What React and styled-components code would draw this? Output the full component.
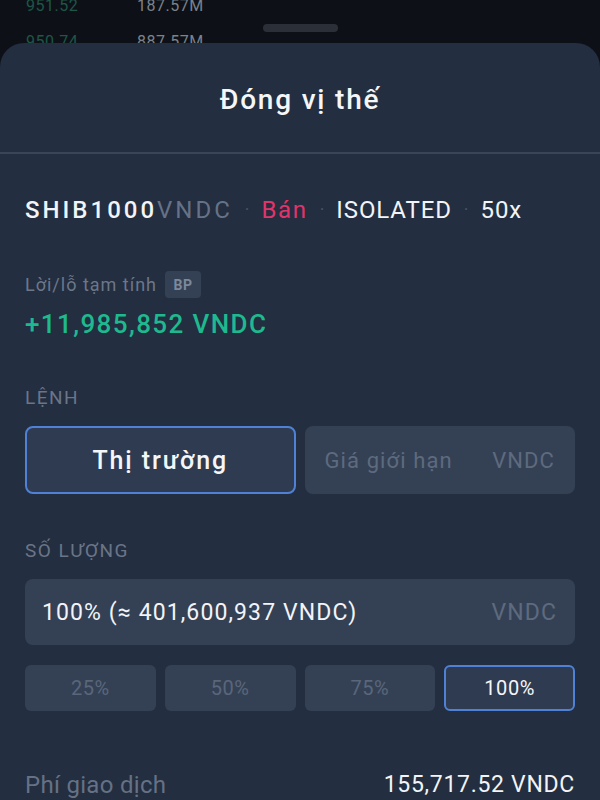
import React from "react";
import styled, { createGlobalStyle } from "styled-components";

const GlobalStyle = createGlobalStyle`
  html, body {
    margin: 0;
    padding: 0;
    background: #0d1117;
    font-family: Roboto, "Noto Sans", sans-serif;
  }
  #root {
    height: 800px;
    overflow: hidden;
  }
`;

const Page = styled.div`
  height: 800px;
  display: flex;
  flex-direction: column;
  background: #0d1117;
`;

const Backdrop = styled.div`
  position: relative;
  height: 43px;
  overflow: hidden;
  padding: 0 0 0 26px;
`;

const BookRow = styled.div`
  display: flex;
  height: 36px;
  margin-top: ${(p) => p.$offset || 0}px;
  font-size: 16px;
  line-height: 20px;
  letter-spacing: 0.5px;
`;

const BookPrice = styled.span`
  width: 111px;
  color: #1f5647;
`;

const BookVol = styled.span`
  color: #7c828b;
`;

const Handle = styled.div`
  position: absolute;
  top: 24px;
  left: 263px;
  width: 75px;
  height: 8px;
  border-radius: 4px;
  background: #2b3038;
`;

const Sheet = styled.div`
  flex: 1;
  background: #232e40;
  border-radius: 24px 24px 0 0;
  display: flex;
  flex-direction: column;
`;

const Header = styled.div`
  height: 111px;
  display: flex;
  align-items: center;
  justify-content: center;
  padding-top: 3px;
  box-sizing: border-box;
  border-bottom: 2px solid #3a4559;
`;

const Title = styled.h1`
  margin: 0;
  font-size: 28px;
  font-weight: 500;
  letter-spacing: 1.8px;
  color: #f4f6f8;
`;

const Body = styled.div`
  padding: 0 25px;
  display: flex;
  flex-direction: column;
`;

const InfoRow = styled.div`
  margin-top: 42px;
  display: flex;
  align-items: center;
  font-size: 24px;
  line-height: 28px;
  letter-spacing: 0.9px;
  color: #f2f4f7;
`;

const Pair = styled.span`
  font-weight: 500;
  letter-spacing: 3px;
`;

const Quote = styled.span`
  color: #667287;
  font-weight: 400;
`;

const Dot = styled.span`
  color: #465267;
  margin: 0 12px;
  font-size: 18px;
  letter-spacing: 0;
`;

const Side = styled.span`
  color: #e0346a;
  letter-spacing: 1.6px;
`;

const PnlLabelRow = styled.div`
  margin-top: 47px;
  display: flex;
  align-items: center;
  gap: 8px;
  font-size: 18px;
  letter-spacing: 1px;
  color: #6c778a;
`;

const Badge = styled.span`
  width: 36px;
  height: 27px;
  border-radius: 4px;
  background: #344155;
  color: #7c889c;
  font-size: 14px;
  font-weight: 700;
  letter-spacing: 0.5px;
  display: flex;
  align-items: center;
  justify-content: center;
`;

const Pnl = styled.div`
  margin-top: 11px;
  font-size: 26px;
  line-height: 30px;
  font-weight: 500;
  letter-spacing: 1.4px;
  color: #1fb98f;
`;

const SectionLabel = styled.div`
  margin-top: ${(p) => p.$top}px;
  font-size: 19px;
  line-height: 20px;
  letter-spacing: 1.5px;
  color: #6a7588;
  text-transform: uppercase;
`;

const Tabs = styled.div`
  margin-top: 18px;
  display: grid;
  grid-template-columns: 1fr 1fr;
  gap: 9px;
`;

const Tab = styled.div`
  height: 68px;
  box-sizing: border-box;
  border-radius: 8px;
  display: flex;
  align-items: center;
  justify-content: ${(p) => (p.$active ? "center" : "space-between")};
  padding: 0 18px 0 18px;
  background: ${(p) => (p.$active ? "#2f3b50" : "#344155")};
  border: 2px solid ${(p) => (p.$active ? "#4f82d6" : "transparent")};
  font-size: ${(p) => (p.$active ? "25px" : "22px")};
  font-weight: ${(p) => (p.$active ? 500 : 400)};
  letter-spacing: ${(p) => (p.$active ? "1.9px" : "1.1px")};
  color: ${(p) => (p.$active ? "#f4f6f8" : "#5e6a7e")};
`;

const AmountBox = styled.div`
  margin-top: 18px;
  height: 66px;
  border-radius: 8px;
  background: #344155;
  display: flex;
  align-items: center;
  justify-content: space-between;
  padding: 0 18px 0 17px;
  font-size: 23px;
  letter-spacing: 1.1px;
  color: #f2f4f7;
`;

const Unit = styled.span`
  color: #5e6a7e;
`;

const Presets = styled.div`
  margin-top: 20px;
  display: grid;
  grid-template-columns: repeat(4, 1fr);
  gap: 9px;
`;

const Preset = styled.div`
  height: 46px;
  box-sizing: border-box;
  border-radius: 6px;
  display: flex;
  align-items: center;
  justify-content: center;
  font-size: 20px;
  letter-spacing: 0.6px;
  background: ${(p) => (p.$active ? "#2f3b50" : "#344155")};
  border: 2px solid ${(p) => (p.$active ? "#4f82d6" : "transparent")};
  color: ${(p) => (p.$active ? "#f4f6f8" : "#5a667a")};
`;

const FeeRow = styled.div`
  margin-top: 61px;
  display: flex;
  justify-content: space-between;
  line-height: 26px;
`;

const FeeLabel = styled.span`
  font-size: 24px;
  letter-spacing: 0.3px;
  color: #667185;
`;

const FeeValue = styled.span`
  font-size: 23px;
  letter-spacing: 0.7px;
  color: #f2f4f7;
`;

const presets = ["25%", "50%", "75%", "100%"];

export default function App() {
  return (
    <Page>
      <GlobalStyle />
      <Backdrop>
        <BookRow $offset={-4}>
          <BookPrice>951.52</BookPrice>
          <BookVol>187.57M</BookVol>
        </BookRow>
        <BookRow>
          <BookPrice>950.74</BookPrice>
          <BookVol>887.57M</BookVol>
        </BookRow>
        <Handle />
      </Backdrop>
      <Sheet>
        <Header>
          <Title>Đóng vị thế</Title>
        </Header>
        <Body>
          <InfoRow>
            <Pair>
              SHIB1000<Quote>VNDC</Quote>
            </Pair>
            <Dot>·</Dot>
            <Side>Bán</Side>
            <Dot>·</Dot>
            <span>ISOLATED</span>
            <Dot>·</Dot>
            <span>50x</span>
          </InfoRow>
          <PnlLabelRow>
            Lời/lỗ tạm tính <Badge>BP</Badge>
          </PnlLabelRow>
          <Pnl>+11,985,852 VNDC</Pnl>
          <SectionLabel $top={49}>Lệnh</SectionLabel>
          <Tabs>
            <Tab $active>Thị trường</Tab>
            <Tab>
              <span>Giá giới hạn</span>
              <span>VNDC</span>
            </Tab>
          </Tabs>
          <SectionLabel $top={47}>Số lượng</SectionLabel>
          <AmountBox>
            <span>100% (≈ 401,600,937 VNDC)</span>
            <Unit>VNDC</Unit>
          </AmountBox>
          <Presets>
            {presets.map((p) => (
              <Preset key={p} $active={p === "100%"}>
                {p}
              </Preset>
            ))}
          </Presets>
          <FeeRow>
            <FeeLabel>Phí giao dịch</FeeLabel>
            <FeeValue>155,717.52 VNDC</FeeValue>
          </FeeRow>
        </Body>
      </Sheet>
    </Page>
  );
}
